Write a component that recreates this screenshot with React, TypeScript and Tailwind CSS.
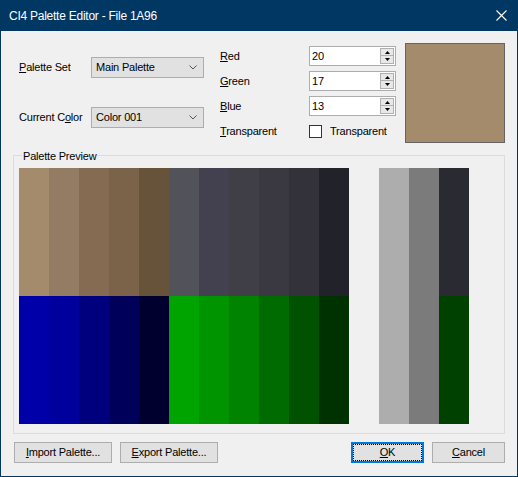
import React from 'react';

const topRow = [
    '#a48b6b', '#947b63', '#846b52', '#7b634a', '#66533a',
    '#52525a', '#434150', '#403f48', '#3a3942', '#33323a', '#22222a',
    '', '#adadad', '#7b7b7b', '#2a2a33', '',
];

const bottomRow = [
    '#0000a8', '#00009c', '#00007f', '#00005a', '#00002e',
    '#00a400', '#009400', '#008400', '#006b00', '#005200', '#003100',
    '', '#adadad', '#7b7b7b', '#004000', '',
];

const Combo = ({ value }: { value: string }) => (
    <div className="w-[113px] h-[21px] bg-[#e1e1e1] border border-[#adadad] flex items-center justify-between pl-[4px] pr-[6px]">
        <span>{value}</span>
        <svg width="8" height="5" viewBox="0 0 8 5">
            <path d="M0.5 0.5 L4 4 L7.5 0.5" fill="none" stroke="#555" strokeWidth="1" />
        </svg>
    </div>
);

const Spin = ({ value }: { value: string }) => (
    <div className="w-[87px] h-[20px] bg-white border border-[#adadad] flex items-center justify-between pl-[2px] pr-px">
        <span>{value}</span>
        <div className="w-[14px] h-[16px] flex flex-col gap-0">
            <div className="h-[8px] bg-[#e8e8e8] border border-[#b0b0b0] flex items-center justify-center">
                <svg width="5" height="3" viewBox="0 0 5 3"><path d="M2.5 0 L5 3 L0 3 Z" fill="#000" /></svg>
            </div>
            <div className="h-[8px] bg-[#e8e8e8] border border-t-0 border-[#b0b0b0] flex items-center justify-center">
                <svg width="5" height="3" viewBox="0 0 5 3"><path d="M0 0 L5 0 L2.5 3 Z" fill="#000" /></svg>
            </div>
        </div>
    </div>
);

const Btn = ({ children, w, focus }: { children: React.ReactNode; w: string; focus?: boolean }) => (
    <div className={`${w} h-[21px] bg-[#e1e1e1] flex items-center justify-center ${focus ? 'border-2 border-[#0078d7]' : 'border border-[#adadad]'}`}>
        {focus ? (
            <div className="w-full h-full border border-dotted border-black flex items-center justify-center">{children}</div>
        ) : children}
    </div>
);

export default function App() {
    return (
        <div className="w-[518px] h-[477px] flex flex-col bg-[#003763] text-[11px] text-black font-['Liberation_Sans',Arial,sans-serif] tracking-[-0.2px]">
            {/* title bar */}
            <div className="h-[31px] shrink-0 flex items-center justify-between pl-[9px] pr-[11px] text-white text-[12px] tracking-[-0.25px]">
                <span>CI4 Palette Editor - File 1A96</span>
                <svg width="11" height="11" viewBox="0 0 11 11">
                    <path d="M0.5 0.5 L10.5 10.5 M10.5 0.5 L0.5 10.5" stroke="#fff" strokeWidth="1.1" />
                </svg>
            </div>

            <div className="flex-1 mx-px mb-px bg-[#f0f0f0] flex flex-col">
                {/* top form */}
                <div className="flex mt-[12px] pl-[18px]">
                    <div className="w-[201px] flex flex-col pt-[14px] gap-[29px]">
                        <div className="h-[21px] flex items-center">
                            <span className="w-[72px]"><u>P</u>alette Set</span>
                            <Combo value="Main Palette" />
                        </div>
                        <div className="h-[21px] flex items-center">
                            <span className="w-[72px]">Current C<u>o</u>lor</span>
                            <Combo value="Color 001" />
                        </div>
                    </div>

                    <div className="w-[185px] flex flex-col pt-[3px] gap-[5px]">
                        <div className="h-[20px] flex items-center">
                            <span className="w-[89px]"><u>R</u>ed</span>
                            <Spin value="20" />
                        </div>
                        <div className="h-[20px] flex items-center">
                            <span className="w-[89px]"><u>G</u>reen</span>
                            <Spin value="17" />
                        </div>
                        <div className="h-[20px] flex items-center">
                            <span className="w-[89px]"><u>B</u>lue</span>
                            <Spin value="13" />
                        </div>
                        <div className="h-[20px] flex items-center">
                            <span className="w-[89px]"><u>T</u>ransparent</span>
                            <div className="w-[13px] h-[13px] bg-white border border-[#333]" />
                            <span className="ml-[8px]">Transparent</span>
                        </div>
                    </div>

                    <div className="w-[100px] h-[100px] border border-[#646464] bg-[#a48b6b]" />
                </div>

                {/* palette preview group */}
                <div className="relative mt-[12px] ml-[12px] w-[492px] h-[279px] border border-[#dcdcdc] pt-[12px] pl-[5px]">
                    <span className="absolute -top-[8px] left-[8px] px-px bg-[#f0f0f0]">Palette Preview</span>
                    <div className="grid grid-cols-[repeat(16,30px)] grid-rows-[128px_128px]">
                        {topRow.map((c, i) => (
                            <div key={'t' + i} style={{ backgroundColor: c || 'transparent' }} />
                        ))}
                        {bottomRow.map((c, i) => (
                            <div key={'b' + i} style={{ backgroundColor: c || 'transparent' }} />
                        ))}
                    </div>
                </div>

                {/* buttons */}
                <div className="flex mt-[8px] ml-[13px] mr-[12px]">
                    <div className="flex gap-[8px]">
                        <Btn w="w-[98px]"><span><u>I</u>mport Palette...</span></Btn>
                        <Btn w="w-[98px]"><span><u>E</u>xport Palette...</span></Btn>
                    </div>
                    <div className="flex gap-[8px] ml-auto">
                        <Btn w="w-[73px]" focus><span><u>O</u>K</span></Btn>
                        <Btn w="w-[73px]"><span><u>C</u>ancel</span></Btn>
                    </div>
                </div>
            </div>
        </div>
    );
}
